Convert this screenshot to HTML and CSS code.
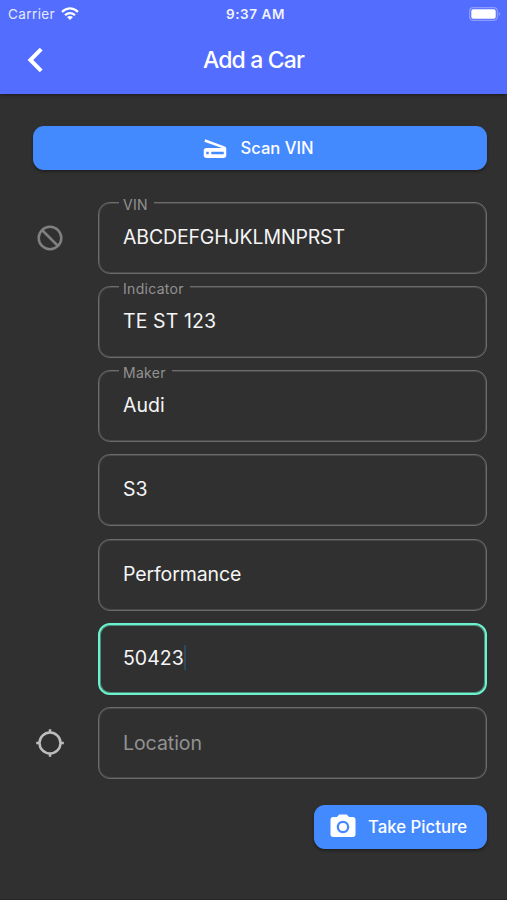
FILE: index.html
```html
<!DOCTYPE html>
<html lang="en">
<head>
<meta charset="utf-8">
<title>Add a Car</title>
<link rel="stylesheet" href="styles.css">
</head>
<body>
<header class="header">
  <div class="status">
    <div class="carrier"><span>Carrier</span>
      <svg class="wifi" viewBox="0 0 18 14" width="18" height="14"><g fill="none" stroke="#fff" stroke-width="2.2"><path d="M1 4.9Q9-2 17 4.9"/><path d="M4 8.2Q9 3.9 14 8.2"/></g><path fill="#fff" d="M6 10.1Q9 7.8 12 10.1L9 13z"/></svg>
    </div>
    <span class="time">9:37 AM</span>
    <svg class="battery" viewBox="0 0 32 14" width="32" height="14"><rect x=".7" y=".7" width="27.6" height="12.6" rx="3.5" fill="none" stroke="#8c9dff" stroke-width="1.2"/><rect x="2.3" y="2.3" width="24.4" height="9.4" rx="1.8" fill="#fff"/><path fill="#8c9dff" d="M29.6 4.8q3 2.2 0 4.4z"/></svg>
  </div>
  <div class="nav">
    <svg class="back" viewBox="0 0 16 26" width="16" height="26"><path d="M14.200 2.200L3.400 13L14.200 23.800" fill="none" stroke="#fff" stroke-width="4"/></svg>
    <h1 class="title">Add a Car</h1>
  </div>
</header>
<main class="content">
  <button class="button scan">
    <svg viewBox="0 0 24 24" width="30" height="30"><path fill="currentColor" d="M19.8 10.7L4.2 5l-.7 1.9L17.6 12H5c-1.1 0-2 .9-2 2v4c0 1.100.9 2 2 2h14c1.100 0 2-.9 2-2v-5.500c0-.8-.5-1.600-1.200-1.800zM7 17H5v-2h2v2zm12 0H9v-2h10v2z"/></svg>
    <span class="scan-text">Scan VIN</span>
  </button>
  <form class="form">
    <div class="row">
      <svg class="row-icon muted" viewBox="0 0 30 30" width="30" height="30"><g fill="none" stroke="currentColor" stroke-width="2.5"><circle cx="15" cy="15" r="11.3"/><path d="M7 7L23 23"/></g></svg>
      <div class="field"><span class="label">VIN</span><span class="value v-vin">ABCDEFGHJKLMNPRST</span></div>
    </div>
    <div class="row"><div class="field"><span class="label">Indicator</span><span class="value v-ind">TE ST 123</span></div></div>
    <div class="row"><div class="field"><span class="label">Maker</span><span class="value">Audi</span></div></div>
    <div class="row"><div class="field"><span class="value">S3</span></div></div>
    <div class="row"><div class="field"><span class="value v-perf">Performance</span></div></div>
    <div class="row"><div class="field active"><span class="value">50423</span><i class="caret"></i></div></div>
    <div class="row">
      <svg class="row-icon" viewBox="0 0 30 30" width="30" height="30"><g fill="none" stroke="currentColor" stroke-width="2.5"><circle cx="15" cy="15" r="10.500"/><path d="M15 1.200V5M15 25v3.800M1.200 15H5M25 15h3.800"/></g></svg>
      <div class="field"><span class="value hint">Location</span></div>
    </div>
  </form>
  <button class="button picture">
    <svg viewBox="0 0 24 24" width="30" height="30"><g fill="currentColor"><circle cx="12" cy="12" r="3.2"/><path d="M9 2L7.170 4H4c-1.100 0-2 .9-2 2v12c0 1.100.9 2 2 2h16c1.100 0 2-.9 2-2V6c0-1.100-.9-2-2-2h-3.170L15 2H9zm3 15c-2.760 0-5-2.240-5-5s2.240-5 5-5 5 2.240 5 5-2.240 5-5 5z"/></g></svg>
    <span class="picture-text">Take Picture</span>
  </button>
</main>
</body>
</html>
```
FILE: styles.css
```css
* { box-sizing: border-box; }
body {
  margin: 0;
  height: 900px;
  overflow: hidden;
  background: #303030;
  color: #fff;
  font-family: Inter, "Liberation Sans", sans-serif;
  border-bottom: 1px solid #262626;
}
.header {
  height: 94px;
  background: #536dfe;
  box-shadow: 0 1px 3px rgba(0, 0, 0, .45);
}
.status {
  height: 27px;
  padding: 0 6px 0 8px;
  display: grid;
  grid-template-columns: 1fr auto 1fr;
  align-items: center;
  font-size: 13px;
  line-height: 27px;
}
.carrier { display: flex; align-items: center; gap: 6px; color: #e6e9ff; font-size: 13.500px; letter-spacing: .4px; }
.time { font-weight: 600; font-size: 13.500px; letter-spacing: .6px; color: #f0f2ff; padding: 1px 0 0 2px; }
.battery { justify-self: end; }
.nav {
  height: 65px;
  display: grid;
  grid-template-columns: 1fr auto 1fr;
  align-items: center;
}
.back { margin-left: 27px; }
.title { margin: 0; font-size: 23px; font-weight: 500; letter-spacing: -.85px; line-height: 30px; }
.content { padding: 32px 20px 0 33px; display: flex; flex-direction: column; }
.button {
  height: 43.500px;
  border: 0;
  padding: 0;
  border-radius: 11px;
  background: #448aff;
  color: #fff;
  font: 500 17px Inter, "Liberation Sans", sans-serif;
  display: flex;
  align-items: center;
  justify-content: center;
  box-shadow: 0 2px 3px rgba(0, 0, 0, .35);
}
.scan { gap: 10px; padding-right: 6px; font-size: 16.600px; }
.form { margin-top: 32px; display: flex; flex-direction: column; gap: 12.250px; }
.row { display: flex; align-items: center; justify-content: flex-end; }
.row-icon { margin: 0 auto 0 2px; color: #bdbdbd; }
.muted { color: #808080; }
.field {
  position: relative;
  width: 389px;
  height: 72px;
  border: 1px solid #6c6c6c;
  box-shadow: inset 0 0 0 1px #484848;
  border-radius: 12px;
  padding: 0 0 2px 24px;
  display: flex;
  align-items: center;
}
.active { border: 2px solid #6df2ce; box-shadow: inset 0 0 0 1px #4b8b7b; padding-left: 23px; }
.label {
  position: absolute;
  left: 20px;
  top: -7px;
  padding: 0 6px 0 4px;
  background: #303030;
  color: #929292;
  font-size: 14px;
  letter-spacing: .3px;
  line-height: 18px;
}
.value { font-size: 19.500px; color: #f5f5f5; line-height: 26px; }
.v-vin { letter-spacing: -.150px; }
.v-ind { letter-spacing: .1px; }
.v-perf { letter-spacing: -.1px; }
.value.hint { color: #929292; padding-top: 2px; letter-spacing: -.05px; }
.caret { width: 2px; height: 25px; margin-left: 0; background: #294a60; }
.picture { width: 173px; margin-top: 26px; align-self: flex-end; gap: 10px; padding-right: 6px; font-size: 16.800px; }
```
